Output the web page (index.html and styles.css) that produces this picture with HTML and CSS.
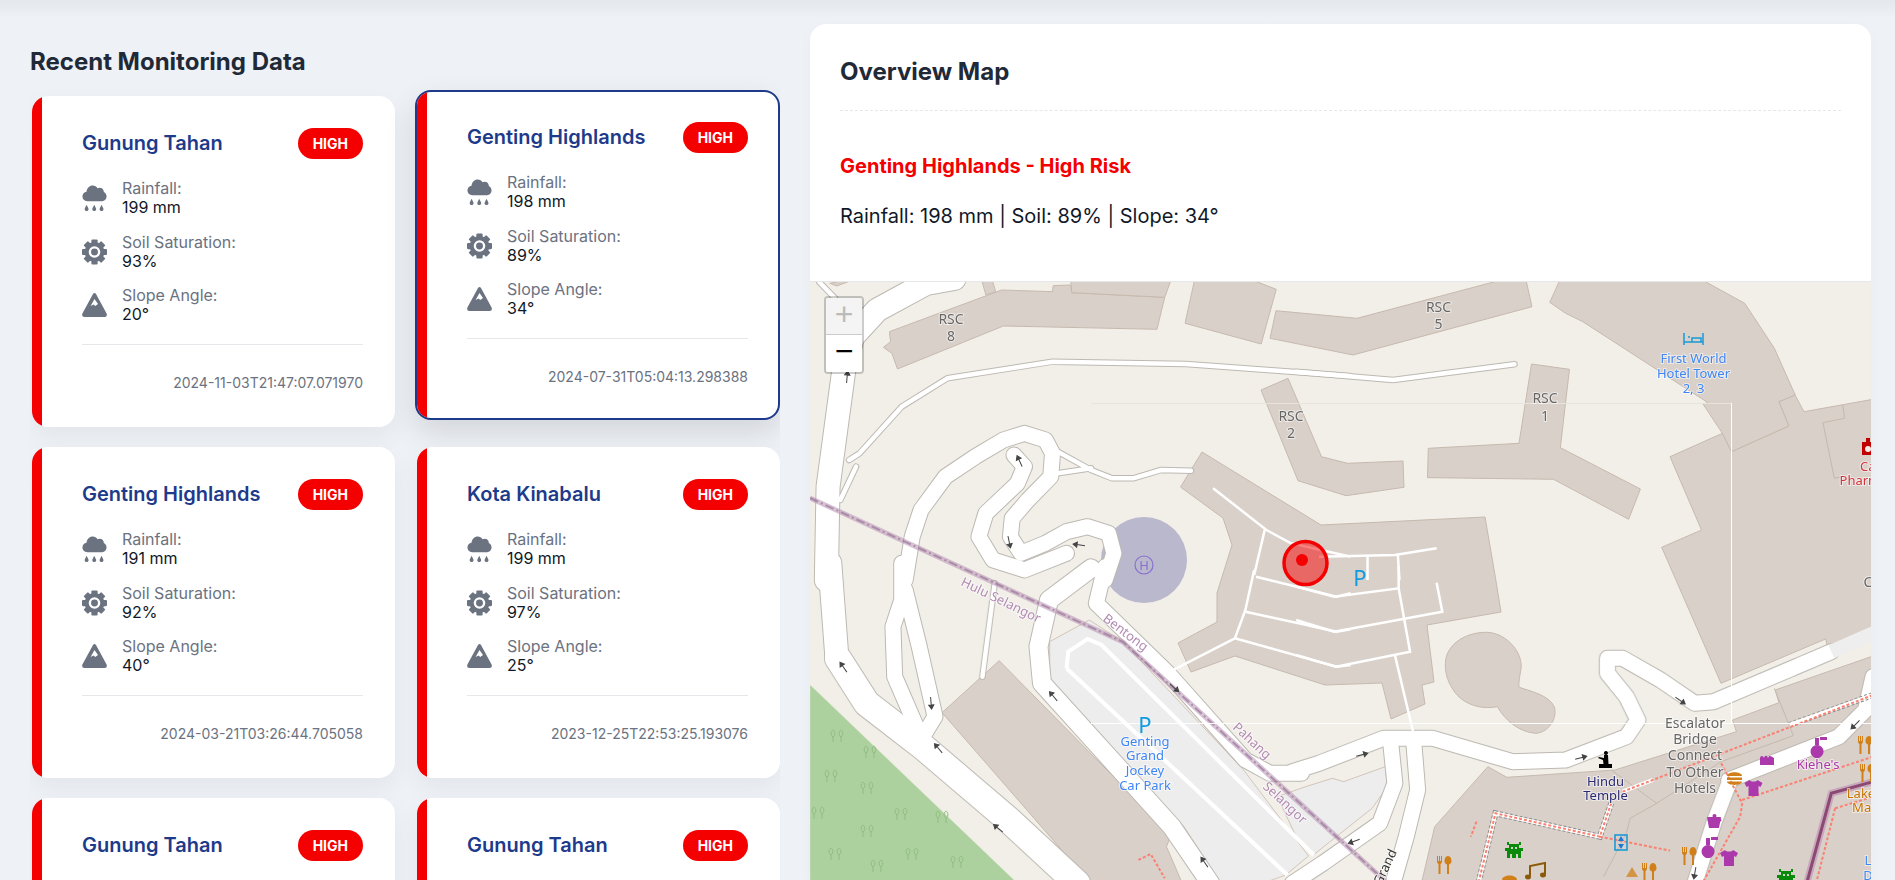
FILE: index.html
```html
<!DOCTYPE html>
<html lang="en">
<head>
  <meta charset="UTF-8">
  <meta name="viewport" content="width=device-width, initial-scale=1.0">
  <title>Landslide Monitoring</title>
  <link rel="stylesheet" href="styles.css">
</head>
<body>
  <svg class="icon-defs" width="0" height="0" aria-hidden="true">
    <symbol id="ic-rain" viewBox="0 0 25 27">
      <path d="M5 16.8C2 16.8 0 14.6 0 11.8 0 9.2 1.8 7.3 4.2 7 4.6 3.2 7.4.6 10.6.6 12.8.6 14.6 1.7 15.6 3.4 16.2 3 17.2 2.8 18 2.8 20.5 2.8 22.2 4.8 22.2 7.2 23.9 7.9 25 9.6 25 11.8 25 14.6 23 16.8 20.5 16.8Z"/>
      <path d="M4.3 20.6 6.1 24.2A2 2 0 1 1 2.5 24.2ZM12.2 20.6 14 24.2A2 2 0 1 1 10.4 24.2ZM19.8 20.6 21.6 24.2A2 2 0 1 1 18 24.2Z"/>
    </symbol>
    <symbol id="ic-gear" viewBox="0 0 24 24">
      <circle cx="12" cy="12" r="9.5"/>
      <g>
        <rect x="9" y="0" width="6" height="24" rx="1"/>
        <rect x="9" y="0" width="6" height="24" rx="1" transform="rotate(45 12 12)"/>
        <rect x="9" y="0" width="6" height="24" rx="1" transform="rotate(90 12 12)"/>
        <rect x="9" y="0" width="6" height="24" rx="1" transform="rotate(135 12 12)"/>
      </g>
      <circle cx="12" cy="12" r="5.6" fill="#fff"/>
      <circle cx="12" cy="12" r="3.3"/>
    </symbol>
    <symbol id="ic-peak" viewBox="0 0 25 25">
      <path d="M11 1.5Q12.5-.5 14 1.5L24.6 21Q25.6 24.6 22.6 24.6H2.4Q-.6 24.6.4 21Z"/>
      <path fill="#fff" d="M12.5 6.5 8.6 13.6 11.6 12 13.2 13.6 16 11.6Z"/>
    </symbol>
  </svg>

  <div class="layout">
    <section class="recent">
      <h2 class="recent-title">Recent Monitoring Data</h2>
      <div class="card-grid">

        <article class="card">
          <div class="card-head"><h3 class="card-name">Gunung Tahan</h3><span class="badge">HIGH</span></div>
          <div class="stat"><svg class="stat-icon"><use href="#ic-rain"/></svg><p class="stat-text">Rainfall:<b>199 mm</b></p></div>
          <div class="stat"><svg class="stat-icon"><use href="#ic-gear"/></svg><p class="stat-text">Soil Saturation:<b>93%</b></p></div>
          <div class="stat"><svg class="stat-icon"><use href="#ic-peak"/></svg><p class="stat-text">Slope Angle:<b>20°</b></p></div>
          <div class="card-time">2024-11-03T21:47:07.071970</div>
        </article>

        <article class="card selected">
          <div class="card-head"><h3 class="card-name">Genting Highlands</h3><span class="badge">HIGH</span></div>
          <div class="stat"><svg class="stat-icon"><use href="#ic-rain"/></svg><p class="stat-text">Rainfall:<b>198 mm</b></p></div>
          <div class="stat"><svg class="stat-icon"><use href="#ic-gear"/></svg><p class="stat-text">Soil Saturation:<b>89%</b></p></div>
          <div class="stat"><svg class="stat-icon"><use href="#ic-peak"/></svg><p class="stat-text">Slope Angle:<b>34°</b></p></div>
          <div class="card-time">2024-07-31T05:04:13.298388</div>
        </article>

        <article class="card">
          <div class="card-head"><h3 class="card-name">Genting Highlands</h3><span class="badge">HIGH</span></div>
          <div class="stat"><svg class="stat-icon"><use href="#ic-rain"/></svg><p class="stat-text">Rainfall:<b>191 mm</b></p></div>
          <div class="stat"><svg class="stat-icon"><use href="#ic-gear"/></svg><p class="stat-text">Soil Saturation:<b>92%</b></p></div>
          <div class="stat"><svg class="stat-icon"><use href="#ic-peak"/></svg><p class="stat-text">Slope Angle:<b>40°</b></p></div>
          <div class="card-time">2024-03-21T03:26:44.705058</div>
        </article>

        <article class="card">
          <div class="card-head"><h3 class="card-name">Kota Kinabalu</h3><span class="badge">HIGH</span></div>
          <div class="stat"><svg class="stat-icon"><use href="#ic-rain"/></svg><p class="stat-text">Rainfall:<b>199 mm</b></p></div>
          <div class="stat"><svg class="stat-icon"><use href="#ic-gear"/></svg><p class="stat-text">Soil Saturation:<b>97%</b></p></div>
          <div class="stat"><svg class="stat-icon"><use href="#ic-peak"/></svg><p class="stat-text">Slope Angle:<b>25°</b></p></div>
          <div class="card-time">2023-12-25T22:53:25.193076</div>
        </article>

        <article class="card">
          <div class="card-head"><h3 class="card-name">Gunung Tahan</h3><span class="badge">HIGH</span></div>
        </article>

        <article class="card">
          <div class="card-head"><h3 class="card-name">Gunung Tahan</h3><span class="badge">HIGH</span></div>
        </article>

      </div>
    </section>

    <section class="overview">
      <h2 class="overview-title">Overview Map</h2>
      <div class="overview-info">
        <h3 class="risk-name">Genting Highlands - High Risk</h3>
        <p class="risk-line">Rainfall: 198 mm | Soil: 89% | Slope: 34°</p>
      </div>

      <div class="map">
        <!-- viewBox is in page pixels, groups with scale() were traced from crops -->
        <svg class="map-svg" viewBox="810 282 1061 598" preserveAspectRatio="none">
          <defs>
            <g id="roads-xxl" class="rd">
              <path transform="translate(800 570) scale(.3507 .3333)" d="M108 265 190 400 350 530 590 745 790 940"/>
            </g>
            <g id="roads-xl" class="rd">
              <path transform="translate(800 270) scale(.3507 .3333)" d="M75 930 80 650 125 300 150 200 220 120 360 40 440 25"/>
              <path transform="translate(800 570) scale(.3507 .3333)" d="M85-20 105 260"/>
            </g>
            <g id="roads-car" class="rd">
              <path transform="translate(800 570) scale(.3507 .3333)" d="M830-5 710 90 680 230 690 340 1060 770 1170 940"/>
            </g>
            <g id="roads-lg" class="rd">
              <path transform="translate(800 270) scale(.3507 .3333)" d="M300 930 320 800 345 720 415 620 500 560 580 510 640 490 700 510 720 550 715 620 650 690 605 745 600 800 630 850 700 820 760 785 820 770 880 790 895 850 870 930"/>
              <path transform="translate(800 270) scale(.3507 .3333)" d="M610 555 640 590 620 640 530 730 510 800 550 870 640 900 760 850"/>
              <path transform="translate(800 570) scale(.3507 .3333)" d="M290-20 290 90 265 170 270 320 340 490"/>
              <path transform="translate(800 570) scale(.3507 .3333)" d="M300 60 340 230 385 440 350 500"/>
              <path transform="translate(800 570) scale(.3507 .3333)" d="M870-10 845 100 1050 310 1270 570 1340 610 1430 610"/>
              <path transform="translate(1300 570) scale(.3795 .3333)" d="M-20 605 50 580 220 505 350 505 560 575 700 570 860 500 890 450 860 380 810 310 810 265 850 265 950 330 1040 400 1090 395 1400 245"/>
              <path transform="translate(1300 570) scale(.3795 .3333)" d="M240 530 250 640 210 760 60 880-20 940"/>
              <path transform="translate(1300 570) scale(.3795 .3333)" d="M300 520 310 660 280 800 245 940"/>
              <path transform="translate(1300 570) scale(.3795 .3333)" d="M1130 640 1090 760 1040 940"/>
              <path transform="translate(1300 570) scale(.3795 .3333)" d="M1130 630 1420 500 1490 420 1510 320"/>
            </g>
            <g id="roads-sm" class="rd">
              <path transform="translate(800 270) scale(.3507 .3333)" d="M140 570 170 550 290 410 420 325 720 275 1100 282 1568 318"/>
              <path transform="translate(1300 270) scale(.3795 .3333)" d="M-10 305 245 330 565 283"/>
              <path transform="translate(800 270) scale(.3507 .3333)" d="M115 690 160 590"/>
              <path transform="translate(800 270) scale(.3507 .3333)" d="M735 545 830 600 890 625 950 625 1030 600 1115 602"/>
              <path transform="translate(800 270) scale(.3507 .3333)" d="M735 610 830 595"/>
              <path transform="translate(800 270) scale(.3507 .3333)" d="M55 36 100 85"/>
              <path transform="translate(800 570) scale(.3507 .3333)" d="M520 320 555 40"/>
            </g>
          </defs>

          <rect x="810" y="282" width="1061" height="598" class="land"/>

          <g class="tiles">
            <polygon class="forest" transform="translate(800 570) scale(.3507 .3333)" points="29,345 610,930 29,930"/>

            <g class="bld" transform="translate(800 270) scale(.3507 .3333)">
              <polygon points="255,185 258,215 238,232 262,250 278,297 580,168 1018,178 1040,82 775,68 772,45 722,47 720,65 575,60"/>
              <polygon points="772,30 1058,30 1040,82 775,68"/>
              <polygon points="518,30 548,30 558,65 530,75"/>
              <polygon points="85,40 130,30 150,30 105,48"/>
              <polygon points="1125,30 1290,30 1358,58 1315,222 1098,160"/>
            </g>
            <g class="bld">
              <polygon points="1276,310.7 1357,318.3 1501,280 1526,280 1532,306.7 1353,355 1270,338.3"/>
              <polygon points="1261,390 1288,378.3 1321.5,456.7 1347.4,463.3 1403,461 1404,487.3 1346,495.7 1298,480.7"/>
              <polygon points="1670,456.7 1722.4,433.3 1731.5,451.7 1788.8,426 1779,401.7 1795,395 1804,411.7 1873,399.3 1873,630 1827.5,646.7 1825.6,639 1721,683.3 1661.7,547.3 1701.5,530"/>
            </g>
            <g class="bld" transform="translate(1300 270) scale(.3795 .3333)">
              <polygon points="610,282 710,298 686,533 897,657 866,748 668,628 336,623 338,535 577,520"/>
              <polygon points="658,97 685,30 1060,30 1172,100 1250,235 1305,375 1262,395 1288,468 1137,545 1113,490 1062,402 1075,398 745,155 700,130"/>
              <polyline class="inner" points="1430,405 1435,445 1378,458 1408,625 1432,620"/>
            </g>
            <g class="bld" transform="translate(1300 570) scale(.3795 .3333)">
              <polygon points="495,590 545,622 830,600 1150,485 1140,450 1262,398 1252,360 1510,258 1510,940 320,940 355,770"/>
              <path d="M383 280C385 220 440 185 495 187 545 190 590 250 582 300 578 325 575 345 578 352 610 365 655 375 670 410 680 450 650 490 620 490 575 485 540 450 520 410 480 420 435 405 410 370 390 340 382 310 383 280Z"/>
              <polyline class="inner" points="1250,355 1300,497 1110,575 940,700 870,745 860,790 800,920"/>
              <polyline class="inner" points="820,600 940,700"/>
            </g>
            <polygon class="bld" points="1202,452 1321,525 1485,517 1495,575 1501,612 1427,625 1434,682 1422,685 1425,704 1391,719 1382,683 1325,685 1235,656 1191,672 1178,643 1217,622 1217,593 1232,545 1223,518 1180.5,487"/>
            <polygon class="bld" transform="translate(800 570) scale(.3507 .3333)" points="405,428 568,272 1058,795 1045,830 1090,940 815,940 800,905"/>

            <circle class="helipad" cx="1144" cy="560" r="43"/>
            <circle class="heli-ring" cx="1144" cy="565" r="9"/>
            <text class="heli-h" x="1144" y="570">H</text>

            <g class="park" transform="translate(800 570) scale(.3507 .3333)">
              <polygon points="712,330 712,215 825,150 920,215 1265,600 1450,858 1385,915 1320,940 1200,940 1095,770"/>
              <polygon points="1440,655 1520,625 1568,660 1568,760 1470,850"/>
            </g>
            <polygon class="park" transform="translate(1300 570) scale(.3795 .3333)" points="-60,680 15,650 85,625 115,635 225,590 230,650 190,715 35,855 -10,800"/>

            <use href="#roads-sm" class="road-case" stroke-width="6.5"/>
            <use href="#roads-lg" class="road-case" stroke-width="17"/>
            <use href="#roads-car" class="road-case" stroke-width="20"/>
            <use href="#roads-xl" class="road-case" stroke-width="25"/>
            <use href="#roads-xxl" class="road-case" stroke-width="28"/>
            <use href="#roads-sm" class="road-fill" stroke-width="4.5"/>
            <use href="#roads-lg" class="road-fill" stroke-width="15"/>
            <use href="#roads-car" class="road-fill" stroke-width="18"/>
            <use href="#roads-xl" class="road-fill" stroke-width="23"/>
            <use href="#roads-xxl" class="road-fill" stroke-width="26"/>

            <path class="plaza" transform="translate(1300 570) scale(.3795 .3333)" d="M1400 245 1520 185"/>

            <g class="lane" transform="translate(800 570) scale(.3507 .3333)">
              <polyline points="760,295 765,245 820,207 860,225 1465,855"/>
              <polyline points="760,295 1390,915"/>
            </g>

            <g class="lane thin" transform="translate(800 270) scale(.3507 .3333)">
              <polyline points="1178,655 1330,780 1400,820 1570,860"/>
              <polyline points="1325,780 1295,915"/>
            </g>
            <g class="lane thin" transform="translate(1300 270) scale(.3795 .3333)">
              <polyline points="50,860 250,855 360,835"/>
              <polyline points="178,860 178,930"/>
              <polyline points="258,855 262,930"/>
            </g>
            <g class="lane thin" transform="translate(800 570) scale(.3507 .3333)">
              <polyline points="1295,0 1270,120 1240,205 1055,305"/>
              <polyline points="1300,20 1530,80 1570,70"/>
              <polyline points="1270,125 1530,185 1570,178"/>
              <polyline points="1240,205 1530,290 1570,285"/>
            </g>
            <g class="lane thin" transform="translate(1300 570) scale(.3795 .3333)">
              <polyline points="-10,50 90,80 260,55 275,150 290,245 95,290 -10,255"/>
              <polyline points="-10,150 90,185 375,125 360,38"/>
              <polyline points="260,-10 260,55"/>
              <polyline points="250,255 300,495"/>
            </g>

            <polyline class="border-wide" points="810,498 1123,642 1395,890"/>
            <polyline class="border-dash" points="810,498 1123,642 1395,890"/>

            <g transform="translate(1300 570) scale(.3795 .3333)">
              <polyline class="path-case" points="1290,465 1510,375"/>
              <polyline class="path-case" points="820,700 790,800 515,730 470,940"/>
              <polyline class="path-core" points="1290,465 1510,375"/>
              <polyline class="path-core" points="850,665 930,630"/>
              <polyline class="path-core" points="820,700 790,800 515,730 470,940"/>
              <polyline class="estate-wide" points="1335,940 1400,670 1510,635"/>
              <polyline class="estate" points="1335,940 1400,670 1510,635"/>
              <polyline class="foot" points="850,665 1510,375"/>
              <polyline class="foot" points="820,700 790,800 515,730 470,940"/>
              <polyline class="foot" points="790,800 975,842"/>
              <polyline class="foot" points="1110,580 1165,700 1160,740 1060,940"/>
              <polyline class="foot" points="1165,690 1510,560"/>
              <polyline class="foot" points="1410,715 1360,940"/>
              <polyline class="foot" points="1410,715 1510,680"/>
              <polyline class="foot" points="465,755 450,800"/>
            </g>
            <polyline class="foot" transform="translate(800 570) scale(.3507 .3333)" points="965,870 1000,852 1040,925"/>

            <path class="seam" d="M1091 723.5H1871M1731.5 403V723.5"/>
            <path class="seam faint" d="M1091 403.5H1731"/>

            <!-- one way arrows -->
            <g class="arrows">
              <path d="M-5 0H3M3-2.6 7 0 3 2.6Z" transform="translate(847 378) rotate(-85)"/>
              <path d="M-5 0H3M3-2.6 7 0 3 2.6Z" transform="translate(1020 462) rotate(-115)"/>
              <path d="M-5 0H3M3-2.6 7 0 3 2.6Z" transform="translate(1009 541) rotate(78)"/>
              <path d="M-5 0H3M3-2.6 7 0 3 2.6Z" transform="translate(1080 545) rotate(188)"/>
              <path d="M-5 0H3M3-2.6 7 0 3 2.6Z" transform="translate(844 668) rotate(-125)"/>
              <path d="M-5 0H3M3-2.6 7 0 3 2.6Z" transform="translate(931 702) rotate(85)"/>
              <path d="M-5 0H3M3-2.6 7 0 3 2.6Z" transform="translate(939 749) rotate(-130)"/>
              <path d="M-5 0H3M3-2.6 7 0 3 2.6Z" transform="translate(1054 697) rotate(-130)"/>
              <path d="M-5 0H3M3-2.6 7 0 3 2.6Z" transform="translate(1173.5 687) rotate(42)"/>
              <path d="M-5 0H3M3-2.6 7 0 3 2.6Z" transform="translate(999 829) rotate(-140)"/>
              <path d="M-5 0H3M3-2.6 7 0 3 2.6Z" transform="translate(1205 863) rotate(-125)"/>
              <path d="M-5 0H3M3-2.6 7 0 3 2.6Z" transform="translate(1361 755) rotate(-15)"/>
              <path d="M-5 0H3M3-2.6 7 0 3 2.6Z" transform="translate(1580 758) rotate(-15)"/>
              <path d="M-5 0H3M3-2.6 7 0 3 2.6Z" transform="translate(1679.5 700) rotate(35)"/>
              <path d="M-5 0H3M3-2.6 7 0 3 2.6Z" transform="translate(1355 841) rotate(160)"/>
              <path d="M-5 0H3M3-2.6 7 0 3 2.6Z" transform="translate(1856 724) rotate(135)"/>
              <path d="M-5 0H3M3-2.6 7 0 3 2.6Z" transform="translate(1695 872) rotate(100)"/>
            </g>

            <!-- forest glyphs -->
            <g class="trees">
              <path id="tree" d="M-4 5V0M-4 0C-7-2-6-6-4-7-2-6-1-2-4 0ZM4 5V0M4 0C1-2 2-6 4-7 6-6 7-2 4 0Z" transform="translate(837 737)"/>
              <use href="#tree" x="33" y="16"/>
              <use href="#tree" x="-6" y="40"/>
              <use href="#tree" x="30" y="52"/>
              <use href="#tree" x="-19" y="77"/>
              <use href="#tree" x="64" y="78"/>
              <use href="#tree" x="105" y="81"/>
              <use href="#tree" x="30" y="95"/>
              <use href="#tree" x="-2" y="118"/>
              <use href="#tree" x="75" y="118"/>
              <use href="#tree" x="120" y="126"/>
              <use href="#tree" x="40" y="130"/>
            </g>

            <!-- poi glyphs -->
            <path class="poi-blue" d="M1684 333V345M1703 333V345M1684 342H1703M1688 337H1690M1692 338H1701V342H1692Z"/>
            <g class="poi-red" transform="translate(1868 447)"><path d="M-6-5H6V8H-6ZM-2-9H2V-5H-2Z"/><circle r="3" cy="2" fill="#f2efe9"/></g>

            <g class="poi-orange">
              <path id="cutlery" d="M-7-9V-4C-7-2-6-1-5.5-1V9H-3.5V-1C-3-1-2-2-2-4V-9H-3V-4H-4V-9H-5V-4H-6V-9ZM4-9C1.5-9 .5-6 .5-4 .5-2 2-.5 3-.5V9H5V-.5C6-.5 7.5-2 7.5-4 7.5-6 6.5-9 4-9Z" transform="translate(1689 856)"/>
              <use href="#cutlery" x="-245" y="9"/>
              <use href="#cutlery" x="-40" y="16"/>
              <use href="#cutlery" x="176" y="-111"/>
              <use href="#cutlery" x="178" y="-83"/>
              <path d="M1727 776C1727 771 1742 771 1742 776ZM1727 777.5H1742V780H1727ZM1727 781.5H1742C1742 786 1727 786 1727 781.5Z"/>
              <path d="M1502 880C1502 874 1517 874 1517 880Z"/>
              <path d="M1632 867 1638 877H1626Z" opacity=".75"/>
            </g>

            <g class="poi-purple">
              <path id="shirt" d="M-4-8-9-5-7-1-5-2V8H5V-2L7-1 9-5 4-8C3-6-3-6-4-8Z" transform="translate(1753.5 788)"/>
              <use href="#shirt" x="-24.5" y="70"/>
              <path d="M1707 817h14l-2 11h-10Z"/>
              <circle cx="1714.5" cy="816" r="2"/>
              <ellipse cx="1714.5" cy="820" rx="7" ry="3"/>
              <path d="M1708 845a6.5 6.5 0 1 0 .1 0ZM1706 838h4v7h-4ZM1711 837h7v3h-7Z"/>
              <path d="M1817 745a6.5 6.5 0 1 0 .1 0ZM1815 738h4v7h-4ZM1820 737h7v3h-7Z"/>
              <path d="M1760 765V758C1761 755 1763 756 1764 758 1765 755 1767 755 1768 758 1769 755 1771 756 1774 758V765Z"/>
            </g>

            <g class="poi-green">
              <path id="invader" d="M-7 8V1H-9V-2H-5V-5H-7V-8H-5V-6H5V-8H7V-5H5V-2H9V1H7V8H4V4H2V8H-2V4H-4V8ZM-3-3V-1H-1V-3ZM1-3V-1H3V-3Z" transform="translate(1514 850)"/>
              <use href="#invader" x="272" y="27"/>
            </g>

            <path class="poi-music" d="M1530 876V866L1545 863V874"/>
            <ellipse class="poi-brown" cx="1528" cy="877" rx="3" ry="2.4"/>
            <ellipse class="poi-brown" cx="1543" cy="875" rx="3" ry="2.4"/>

            <rect class="poi-lift" x="1615" y="835" width="12" height="15"/>
            <path class="poi-lift-in" d="M1621 836 1624 841H1618ZM1621 849 1618 844H1624Z"/>

            <path class="poi-temple" d="M1606 751a2 2 0 1 1-.1 0ZM1604 755H1608L1608.5 764H1612V768H1599V764H1603.5L1603 760 1598 758 1599 757 1604 758Z"/>

            <!-- labels -->
            <g class="lbl gray">
              <text x="951" y="324">RSC</text><text x="951" y="341">8</text>
              <text x="1438.5" y="312">RSC</text><text x="1438.5" y="329">5</text>
              <text x="1291" y="421">RSC</text><text x="1291" y="438">2</text>
              <text x="1545" y="403">RSC</text><text x="1545" y="421">1</text>
              <text x="1695" y="728">Escalator</text>
              <text x="1695" y="744">Bridge</text>
              <text x="1695" y="760">Connect</text>
              <text x="1695" y="777">To Other</text>
              <text x="1695" y="793">Hotels</text>
              <text x="1868" y="587">C</text>
            </g>
            <g class="lbl blue">
              <text x="1693.5" y="363">First World</text>
              <text x="1693.5" y="378">Hotel Tower</text>
              <text x="1693.5" y="393">2, 3</text>
              <text x="1145" y="746">Genting</text>
              <text x="1145" y="760">Grand</text>
              <text x="1145" y="775">Jockey</text>
              <text x="1145" y="790">Car Park</text>
              <text x="1868" y="865">L</text>
              <text x="1868" y="880">D</text>
            </g>
            <text class="big-p" x="1145" y="733">P</text>
            <text class="big-p" x="1360" y="586">P</text>
            <g class="lbl red">
              <text x="1874" y="471">Care</text>
              <text x="1870" y="485">Pharmacy</text>
            </g>
            <g class="lbl navy">
              <text x="1605.5" y="786">Hindu</text>
              <text x="1605.5" y="800">Temple</text>
            </g>
            <text class="lbl violet" x="1818" y="769">Kiehe's</text>
            <g class="lbl amber">
              <text x="1861" y="798">Lake</text>
              <text x="1865" y="812">Mall</text>
            </g>
            <g class="lbl mauve">
              <text transform="translate(999 604) rotate(26)">Hulu Selangor</text>
              <text transform="translate(1123 636) rotate(37)">Bentong</text>
              <text transform="translate(1249 744) rotate(43)">Pahang</text>
              <text transform="translate(1282 806) rotate(43)">Selangor</text>
            </g>
            <text class="lbl dark" transform="translate(1389 869) rotate(-65)">Grand</text>
          </g>

          <circle class="marker" cx="1305.5" cy="563" r="21.5"/>
          <circle class="marker-dot" cx="1302" cy="560" r="6"/>
        </svg>

        <div class="zoom-ctl">
          <button class="zoom-btn disabled">+</button>
          <button class="zoom-btn">−</button>
        </div>
      </div>
    </section>
  </div>
</body>
</html>
```

FILE: styles.css
```css
* {
  box-sizing: border-box;
}
html, body {
  height: 100%;
}
body {
  margin: 0;
  font-family: 'Inter', 'Liberation Sans', sans-serif;
  background: linear-gradient(#e4e7ec, #eef1f6 18px) no-repeat #eef1f6;
  color: #111827;
  overflow: hidden;
}
.icon-defs {
  position: absolute;
}
.layout {
  display: grid;
  grid-template-columns: 750px 1061px;
  column-gap: 30px;
  height: 880px;
  padding: 24px 0 0 30px;
}

/* left column */
.recent {
  height: 856px;
  overflow: hidden;
}
.recent-title {
  margin: 21px 0 27px;
  height: 24px;
  font-size: 24px;
  line-height: 34px;
  font-weight: 700;
  color: #1f2937;
}
.card-grid {
  display: grid;
  grid-template-columns: 365px 365px;
  grid-auto-rows: 331px;
  gap: 20px;
}
.card {
  position: relative;
  margin-left: 2px;
  padding: 32px 32px 0 50px;
  background: #fff;
  border-radius: 16px;
  overflow: hidden;
  box-shadow: 0 10px 25px rgba(0, 0, 0, 0.05);
}
.card::before {
  content: '';
  position: absolute;
  left: 0;
  top: 0;
  bottom: 0;
  width: 10px;
  background: #f50000;
}
.card.selected {
  margin-left: 0;
  height: 330px;
  padding: 30px 30px 0 50px;
  border: 2px solid #1e3a8a;
  transform: translateY(-6px);
  box-shadow: 0 12px 30px rgba(0, 0, 0, 0.12);
}
.card-head {
  display: flex;
  justify-content: space-between;
  align-items: center;
  height: 31px;
  margin-bottom: 20px;
}
.card-name {
  margin: -1px 0 0;
  font-size: 20px;
  font-weight: 600;
  color: #1e3a8a;
}
.badge {
  padding: 0 15px;
  height: 31px;
  line-height: 31px;
  border-radius: 16px;
  background: #f50000;
  color: #fff;
  font-size: 14px;
  font-weight: 700;
}
.stat {
  display: flex;
  align-items: center;
  gap: 15px;
  margin-bottom: 15.2px;
}
.stat-icon {
  width: 25px;
  height: 26px;
  flex: none;
  fill: #6b7280;
}
.stat-text {
  margin: 0;
  font-size: 16px;
  line-height: 19.2px;
  color: #6b7280;
}
.stat-text b {
  display: block;
  font-weight: 400;
  color: #111827;
}
.card-time {
  margin-top: 19px;
  padding-top: 27px;
  border-top: 1px solid #e5e7eb;
  font-size: 14px;
  line-height: 22px;
  text-align: right;
  color: #6b7280;
}

/* right column */
.overview {
  display: flex;
  flex-direction: column;
  height: 856px;
  background: #fff;
  border-radius: 16px 16px 0 0;
  overflow: hidden;
  box-shadow: 0 4px 12px rgba(0, 0, 0, 0.03);
}
.overview-title {
  margin: 0 30px;
  height: 87px;
  padding-top: 31px;
  border-bottom: 1px dashed #e5e7eb;
  font-size: 24px;
  line-height: 34px;
  font-weight: 700;
  color: #1f2937;
}
.overview-info {
  height: 171px;
  padding: 42px 30px 0;
  border-bottom: 1px solid #e5e7eb;
}
.risk-name {
  margin: 0 0 24px;
  font-size: 20px;
  line-height: 26px;
  font-weight: 700;
  color: #f50000;
}
.risk-line {
  margin: 0;
  font-size: 20px;
  line-height: 26px;
}

/* map */
.map {
  position: relative;
  flex: 1;
  overflow: hidden;
}
.map-svg {
  display: block;
  width: 100%;
  height: 100%;
}
.land {
  fill: #f2efe9;
}
.tiles {
  filter: blur(0.45px);
}
.forest {
  fill: #add19e;
}
.bld, .bld polygon, .bld path {
  fill: #d9d0c9;
  stroke: #c6b9ae;
  stroke-width: 1;
  vector-effect: non-scaling-stroke;
}
.bld .inner {
  fill: none;
  stroke: #c6b9ae;
  vector-effect: non-scaling-stroke;
}
.helipad {
  fill: #b9b8cc;
}
.heli-ring {
  fill: none;
  stroke: #8a6fd0;
  stroke-width: 1.2;
}
.heli-h {
  font: 13px 'Noto Sans', sans-serif;
  text-anchor: middle;
  fill: #8a6fd0;
}
.park polygon, polygon.park {
  fill: #ededed;
  stroke: #d2c4b8;
  stroke-width: 1;
  vector-effect: non-scaling-stroke;
}
.rd path {
  fill: none;
  stroke-linejoin: round;
  stroke-linecap: round;
  vector-effect: non-scaling-stroke;
}
.road-case {
  stroke: #bdb9b2;
}
.road-fill {
  stroke: #fff;
}
.plaza {
  fill: none;
  stroke: #eeeeee;
  stroke-width: 14;
  vector-effect: non-scaling-stroke;
}
.lane polyline {
  fill: none;
  stroke: #fff;
  stroke-width: 4;
  vector-effect: non-scaling-stroke;
}
.lane.thin polyline {
  stroke-width: 2.5;
}
.border-wide {
  fill: none;
  stroke: #b78fb0;
  stroke-width: 5;
  opacity: 0.55;
}
.border-dash {
  fill: none;
  stroke: #8f6a92;
  stroke-width: 2;
  stroke-dasharray: 9 3 2 3;
  opacity: 0.6;
}
.foot {
  fill: none;
  stroke: #fa8072;
  stroke-width: 2;
  stroke-dasharray: 3 2;
  vector-effect: non-scaling-stroke;
}
.path-case {
  fill: none;
  stroke: #8d8d8d;
  stroke-width: 6;
  stroke-dasharray: 3 2;
  vector-effect: non-scaling-stroke;
}
.path-core {
  fill: none;
  stroke: #fff;
  stroke-width: 4;
  vector-effect: non-scaling-stroke;
}
.estate-wide {
  fill: none;
  stroke: #c9a7bd;
  stroke-width: 7;
  vector-effect: non-scaling-stroke;
}
.estate {
  fill: none;
  stroke: #8a4a72;
  stroke-width: 3;
  vector-effect: non-scaling-stroke;
}
.seam {
  fill: none;
  stroke: #fff;
  stroke-width: 1;
}
.seam.faint {
  stroke: #e8e4dc;
}
.arrows path {
  fill: #444;
  stroke: #444;
  stroke-width: 1;
}
.trees {
  fill: none;
  stroke: #8fbc80;
  stroke-width: 1;
}
.poi-blue {
  fill: none;
  stroke: #1a9ad6;
  stroke-width: 1.5;
}
.poi-red {
  fill: #c00000;
}
.poi-orange {
  fill: #d18019;
}
.poi-purple {
  fill: #ac39ac;
}
.poi-green {
  fill: #0a8a0a;
}
.poi-music {
  fill: none;
  stroke: #8a5a0a;
  stroke-width: 2;
}
.poi-brown {
  fill: #8a5a0a;
}
.poi-lift {
  fill: none;
  stroke: #1a9ad6;
  stroke-width: 1.6;
}
.poi-lift-in {
  fill: #1a7ad6;
}
.poi-temple {
  fill: #000;
}
.lbl, .lbl text {
  font-family: 'Noto Sans', 'DejaVu Sans', sans-serif;
  font-size: 13px;
  text-anchor: middle;
  paint-order: stroke;
  stroke: rgba(255, 255, 255, 0.55);
  stroke-width: 2px;
}
.lbl.gray, .lbl.gray text {
  font-size: 14px;
  fill: #666;
}
.lbl.blue {
  fill: #3f86f5;
}
.lbl.red {
  fill: #d3333a;
}
.lbl.navy {
  fill: #2a2a72;
}
.lbl.violet {
  fill: #ac39ac;
}
.lbl.amber {
  fill: #c77400;
}
.lbl.mauve {
  fill: #b28ab2;
}
.lbl.dark {
  fill: #333;
}
.big-p {
  font: 22px 'Noto Sans', sans-serif;
  text-anchor: middle;
  fill: #0f9be0;
}
.marker {
  fill: rgba(245, 0, 0, 0.5);
  stroke: #f50000;
  stroke-width: 3.5;
}
.marker-dot {
  fill: #f50000;
}
.zoom-ctl {
  position: absolute;
  left: 14px;
  top: 14px;
  display: flex;
  flex-direction: column;
  border: 2px solid rgba(0, 0, 0, 0.2);
  border-radius: 4px;
  overflow: hidden;
}
.zoom-btn {
  width: 36px;
  height: 37px;
  padding: 0;
  border: 0;
  background: #fff;
  color: #000;
  font-family: 'Liberation Mono', monospace;
  font-size: 32px;
  line-height: 37px;
}
.zoom-btn.disabled {
  border-bottom: 1px solid #ccc;
  background: #f4f4f4;
  color: #bbb;
}
```
